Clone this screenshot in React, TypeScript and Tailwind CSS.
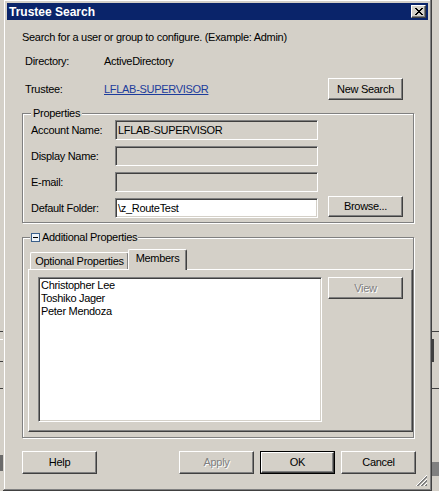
import React from "react";

const raised =
  "border border-t-white border-l-white border-r-[#404040] border-b-[#404040] shadow-[inset_-1px_-1px_0_#808080,inset_1px_1px_0_#d4d0c8]";
const sunken =
  "border border-t-[#808080] border-l-[#808080] border-r-white border-b-white shadow-[inset_1px_1px_0_#404040,inset_-1px_-1px_0_#d4d0c8]";
const etched =
  "border border-[#808080] shadow-[1px_1px_0_#ffffff,inset_1px_1px_0_#ffffff]";
const disabledText = "text-[#808080] [text-shadow:1px_1px_0_#ffffff]";

function Btn({
  label,
  disabled,
  isDefault,
  className = "",
}: {
  label: string;
  disabled?: boolean;
  isDefault?: boolean;
  className?: string;
}) {
  const inner = (
    <div
      className={`${raised} w-full h-full flex items-center justify-center bg-[#d4d0c8] ${
        disabled ? disabledText : "text-black"
      }`}
    >
      {label}
    </div>
  );
  if (isDefault) {
    return (
      <div className={`border border-black ${className}`}>{inner}</div>
    );
  }
  return <div className={className}>{inner}</div>;
}

function Field({ value, white }: { value?: string; white?: boolean }) {
  return (
    <div
      className={`${sunken} w-[203px] h-[20px] flex items-center pl-[2px] leading-[13px] ${
        white ? "bg-white" : "bg-[#d4d0c8]"
      }`}
    >
      {value}
    </div>
  );
}

export default function App() {
  return (
    <div className="relative w-[439px] h-[491px] overflow-hidden bg-[#d4d0c8] font-['Liberation_Sans',Arial,sans-serif] text-[11px] tracking-[-0.3px] text-black">
      {/* desktop behind the dialog */}
      <div className="absolute left-0 top-[331px] w-[3px] h-[1px] bg-[#404040]" />
      <div className="absolute left-0 top-[339px] w-[3px] h-[1px] bg-white" />
      <div className="absolute left-0 top-[361px] w-[3px] h-[1px] bg-[#404040]" />
      <div className="absolute left-0 top-[388px] w-[3px] h-[1px] bg-[#404040]" />
      <div className="absolute left-0 top-[455px] w-[3px] h-[16px] bg-[#6b6b6b]" />
      <div className="absolute left-[432px] top-[331px] w-[7px] h-[1px] bg-[#404040]" />
      <div className="absolute left-[432px] top-[339px] w-[2px] h-[23px] bg-[#404040]" />
      <div className="absolute left-[432px] top-[388px] w-[7px] h-[1px] bg-[#404040]" />
      <div className="absolute left-[432px] top-[462px] w-[7px] h-[14px] bg-[#808080]" />

      {/* dialog window */}
      <div className="absolute left-[3px] top-[-1px] w-[429px] h-[492px] bg-[#d4d0c8] p-[4px] shadow-[inset_-1px_-1px_0_#404040,inset_1px_1px_0_#d4d0c8,inset_-2px_-2px_0_#808080,inset_2px_2px_0_#ffffff] flex flex-col">
        {/* title bar */}
        <div className="h-[17px] bg-[#0a246a] flex items-center pl-[2px] pr-[2px] shrink-0">
          <span className="text-white font-bold text-[12px] tracking-normal leading-[14px]">
            Trustee Search
          </span>
          <div className={`${raised} ml-auto w-[15px] h-[13px] bg-[#d4d0c8] flex items-center justify-center`}>
            <svg width="8" height="7" viewBox="0 0 8 7" shapeRendering="crispEdges">
              <path
                d="M0 0h2v1H0zM6 0h2v1H6zM1 1h2v1H1zM5 1h2v1H5zM2 2h4v1H2zM3 3h2v1H3zM2 4h4v1H2zM1 5h2v1H1zM5 5h2v1H5zM0 6h2v1H0zM6 6h2v1H6z"
                fill="#000"
              />
            </svg>
          </div>
        </div>

        {/* body */}
        <div className="relative flex-1 flex flex-col pl-[15px] pr-[14px]">
          <div className="mt-[11px] h-[13px] leading-[13px]">
            Search for a user or group to configure. (Example: Admin)
          </div>

          <div className="mt-[11px] h-[13px] leading-[13px] flex pl-[3px]">
            <span className="w-[79px]">Directory:</span>
            <span>ActiveDirectory</span>
          </div>

          <div className="mt-[10px] h-[22px] flex items-center pl-[3px]">
            <span className="w-[79px] leading-[13px]">Trustee:</span>
            <span className="leading-[13px] text-[#1c3c9c] underline underline-offset-[1px]">
              LFLAB-SUPERVISOR
            </span>
            <Btn label="New Search" className="ml-auto mr-[11px] w-[75px] h-[22px]" />
          </div>

          {/* Properties group */}
          <div className={`${etched} relative mt-[13px] w-[392px] h-[110px] pt-[6px] pl-[8px] flex flex-col gap-[6px]`}>
            <div className="absolute left-[8px] top-[-7px] px-[2px] bg-[#d4d0c8] leading-[13px]">
              Properties
            </div>
            <div className="flex items-center h-[20px]">
              <span className="w-[84px] leading-[13px]">Account Name:</span>
              <Field value="LFLAB-SUPERVISOR" />
            </div>
            <div className="flex items-center h-[20px]">
              <span className="w-[84px] leading-[13px]">Display Name:</span>
              <Field />
            </div>
            <div className="flex items-center h-[20px]">
              <span className="w-[84px] leading-[13px]">E-mail:</span>
              <Field />
            </div>
            <div className="flex items-center h-[20px]">
              <span className="w-[84px] leading-[13px]">Default Folder:</span>
              <Field value="\z_RouteTest" white />
              <Btn label="Browse..." className="ml-[10px] self-start -mt-[2px] w-[75px] h-[21px]" />
            </div>
          </div>

          {/* Additional Properties group */}
          <div className={`${etched} relative mt-[14px] w-[392px] h-[201px] pl-[5px]`}>
            <div className="absolute left-[7px] top-[-7px] px-[1px] bg-[#d4d0c8] leading-[13px] flex items-center gap-[2px]">
              <svg width="9" height="9" viewBox="0 0 9 9" shapeRendering="crispEdges">
                <rect x="0.5" y="0.5" width="8" height="8" fill="#eef3f8" stroke="#3a5f8a" />
                <rect x="2" y="4" width="5" height="1" fill="#000" />
              </svg>
              <span>Additional Properties</span>
            </div>

            <div className="mt-[11px] w-[385px] flex flex-col">
              {/* tabs */}
              <div className="relative h-[20px] flex items-end pl-[2px] z-10">
                <div className="w-[99px] h-[17px] bg-[#d4d0c8] rounded-tl-[2px] rounded-tr-[2px] border-t border-l border-r border-t-white border-l-white border-r-[#404040] shadow-[inset_-1px_0_0_#808080] flex items-center justify-center leading-[13px]">
                  Optional Properties
                </div>
                <div className="-ml-[1px] mb-[-1px] w-[59px] h-[21px] bg-[#d4d0c8] rounded-tl-[2px] rounded-tr-[2px] border-t border-l border-r border-t-white border-l-white border-r-[#404040] shadow-[inset_-1px_0_0_#808080] flex items-start justify-center pt-[2px] leading-[13px]">
                  Members
                </div>
              </div>
              {/* pane */}
              <div className={`${raised} h-[163px] pt-[7px] pl-[9px] flex items-start`}>
                <div className={`${sunken} w-[284px] h-[145px] bg-white pt-[1px] pl-[2px] flex flex-col leading-[13px]`}>
                  <span>Christopher Lee</span>
                  <span>Toshiko Jager</span>
                  <span>Peter Mendoza</span>
                </div>
                <Btn label="View" disabled className="ml-[6px] w-[75px] h-[22px]" />
              </div>
            </div>
          </div>

          {/* bottom buttons */}
          <div className="mt-[13px] flex -mr-[2px]">
            <Btn label="Help" className="w-[75px] h-[23px]" />
            <div className="ml-auto flex gap-[6px]">
              <Btn label="Apply" disabled className="w-[75px] h-[23px]" />
              <Btn label="OK" isDefault className="w-[75px] h-[23px]" />
              <Btn label="Cancel" className="w-[75px] h-[23px]" />
            </div>
          </div>

          {/* size grip */}
          <svg
            className="absolute right-0 bottom-0"
            width="13"
            height="13"
            viewBox="0 0 13 13"
            shapeRendering="crispEdges"
          >
            {[0, 4, 8].map((o) => (
              <g key={o}>
                <line x1={12} y1={o + 1} x2={o + 1} y2={12} stroke="#ffffff" strokeWidth="1" />
                <line x1={12} y1={o + 2} x2={o + 2} y2={12} stroke="#808080" strokeWidth="1" />
                <line x1={12} y1={o + 3} x2={o + 3} y2={12} stroke="#808080" strokeWidth="1" />
              </g>
            ))}
          </svg>
        </div>
      </div>
    </div>
  );
}
